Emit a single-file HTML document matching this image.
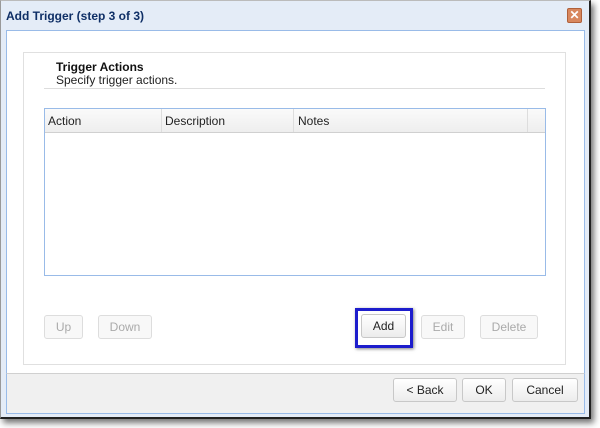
<!DOCTYPE html>
<html><head><style>
body{margin:0;width:600px;height:428px;background:#fff;font-family:"Liberation Sans",sans-serif;position:relative;overflow:hidden}
.abs{position:absolute}
.win{left:0;top:0;width:588px;height:416px;background:#e4ecf7;border:1px solid #222;border-top-color:#bbb;border-left-color:#999;border-right-width:2px;border-bottom-width:2px;box-shadow:3px 4px 6px rgba(0,0,0,.55)}
.title{left:6px;top:9px;font-size:12px;font-weight:bold;color:#0f2f66}
.close{left:567px;top:8px;width:13px;height:13px;background:#d8875e;border:1px solid #b0603a;border-radius:2px;color:#fff;font-size:12px;font-weight:bold;line-height:13px;text-align:center}
.body{left:6px;top:30px;width:577px;height:343px;background:#fff;border:1px solid #99bbe8;border-bottom:none}
.foot{left:6px;top:373px;width:577px;height:39px;background:#f0f0f0;border:1px solid #99bbe8;border-top:1px solid #d0d0d0}
.grp{left:23px;top:52px;width:541px;height:311px;border:1px solid #e0e0e0}
.btn{border:1px solid #c8c8c8;border-radius:3px;background:linear-gradient(#fff,#ececec);font-size:12px;text-align:center;line-height:22px;color:#222;box-sizing:border-box;height:24px}
.dis{color:#aaa;border-color:#ddd;background:#f8f8f8}
</style></head><body>
<div class="abs win"></div>
<div class="abs title">Add Trigger (step 3 of 3)</div>
<div class="abs close">✕</div>
<div class="abs body"></div>
<div class="abs foot"></div>
<div class="abs grp"></div>
<div class="abs" style="left:56px;top:60px;font-size:12px;font-weight:bold;color:#111">Trigger Actions</div>
<div class="abs" style="left:56px;top:73px;font-size:12px;color:#222">Specify trigger actions.</div>
<div class="abs" style="left:44px;top:88px;width:501px;height:1px;background:#ddd"></div>
<div class="abs" style="left:44px;top:108px;width:500px;height:166px;border:1px solid #99bbe8;background:#fff"></div>
<div class="abs" style="left:45px;top:109px;width:500px;height:23px;background:linear-gradient(#fafafa,#eee);border-bottom:1px solid #d0d0d0;font-size:12px;color:#222">
<span class="abs" style="left:3px;top:5px">Action</span>
<span class="abs" style="left:120px;top:5px">Description</span>
<span class="abs" style="left:253px;top:5px">Notes</span>
<span class="abs" style="left:116px;top:0;width:1px;height:23px;background:#ddd"></span>
<span class="abs" style="left:248px;top:0;width:1px;height:23px;background:#ddd"></span>
<span class="abs" style="left:482px;top:0;width:1px;height:23px;background:#ddd"></span>
</div>
<div class="abs btn dis" style="left:44px;top:315px;width:39px">Up</div>
<div class="abs btn dis" style="left:98px;top:315px;width:54px">Down</div>
<div class="abs" style="left:355px;top:308px;width:52px;height:34px;border:3px solid #1d1dcc;box-shadow:1px 1px 3px rgba(0,0,0,.5)"></div>
<div class="abs btn" style="left:361px;top:314px;width:45px">Add</div>
<div class="abs btn dis" style="left:421px;top:315px;width:44px">Edit</div>
<div class="abs btn dis" style="left:480px;top:315px;width:58px">Delete</div>
<div class="abs btn" style="left:393px;top:378px;width:64px">&lt; Back</div>
<div class="abs btn" style="left:462px;top:378px;width:44px">OK</div>
<div class="abs btn" style="left:512px;top:378px;width:66px">Cancel</div>
</body></html>
